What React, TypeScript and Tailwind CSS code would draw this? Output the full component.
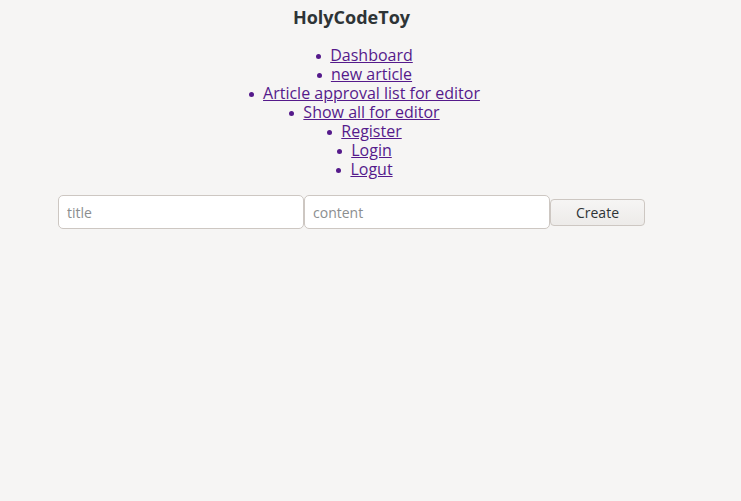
const links = [
  'Dashboard',
  'new article',
  'Article approval list for editor',
  'Show all for editor',
  'Register',
  'Login',
  'Logut',
];

export default function App() {
  return (
    <div
      className="min-h-[501px] w-full bg-[#f6f5f4] text-[#2e3436]"
      style={{ fontFamily: '"Open Sans", "DejaVu Sans", sans-serif' }}
    >
      <div className="w-[703px] text-center">
        <h1 className="pt-[7px] text-[18px] font-bold leading-[20px]">HolyCodeToy</h1>
        <ul className="mt-[19px] pl-[26px] text-[16px] leading-[19px]">
          {links.map(l => (
            <li key={l}>
              <span className="mr-[9px] inline-block h-[5px] w-[5px] rounded-full bg-[#551a8b] align-middle" />
              <a href="#" className="text-[#551a8b] underline">
                {l}
              </a>
            </li>
          ))}
        </ul>
        <form className="mt-[16px] flex items-center justify-center" onSubmit={e => e.preventDefault()}>
          <input
            placeholder="title"
            className="h-[34px] w-[246px] rounded-[5px] border border-[#cdc7c2] bg-white px-[8px] text-[14px] placeholder:text-[#8b8e8f] focus:outline-none"
          />
          <input
            placeholder="content"
            className="h-[34px] w-[246px] rounded-[5px] border border-[#cdc7c2] bg-white px-[8px] text-[14px] placeholder:text-[#8b8e8f] focus:outline-none"
          />
          <button
            type="submit"
            className="h-[27px] w-[95px] rounded-[4px] border border-[#cdc7c2] bg-gradient-to-b from-[#f6f5f4] to-[#edebe9] text-[14px] text-[#2e3436]"
          >
            Create
          </button>
        </form>
      </div>
    </div>
  );
}
